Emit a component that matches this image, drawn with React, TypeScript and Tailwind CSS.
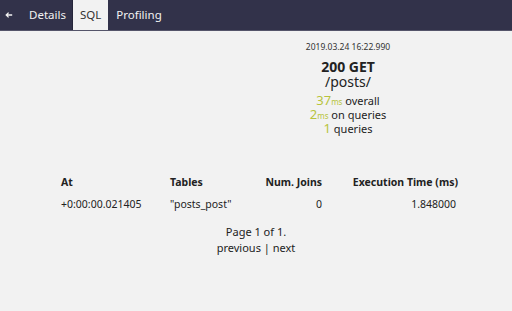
import React from "react";

const rows = [
  { at: "+0:00:00.021405", tables: '"posts_post"', joins: "0", time: "1.848000" },
];

const App: React.FC = () => {
  return (
    <div
      className="w-[512px] h-[311px] bg-[#f2f2f2] text-[#222] overflow-hidden"
      style={{ fontFamily: '"Noto Sans", "Open Sans", sans-serif' }}
    >
      <nav className="flex h-[31px] bg-[#32324a] border-b border-[#55556a] text-[11.5px] text-[#f2f2f2]">
        <a className="flex items-center pl-[5px] pr-[10px]">
          <svg width="8" height="8" viewBox="0 0 10 10" fill="none" stroke="currentColor" strokeWidth="1.6">
            <path d="M9 5H1.5M4.5 2L1.5 5l3 3" />
          </svg>
        </a>
        <a className="flex items-center pl-[6px] pr-[6px] border-r border-[#26263a]">Details</a>
        <a className="flex items-center px-[7px] bg-[#f2f2f2] text-[#333]">SQL</a>
        <a className="flex items-center px-[8px]">Profiling</a>
      </nav>

      <div className="flex pt-[10px]">
        <div className="w-[184px]" />
        <div className="flex-1 flex flex-col items-center">
          <div className="text-[8.5px] leading-[12px] text-[#333]">2019.03.24 16:22.990</div>
          <div className="mt-[7px] text-[14px] font-bold leading-[14px]">200 GET</div>
          <div className="mt-[1px] text-[14px] leading-[14px]">/posts/</div>
          <div className="mt-[5px] flex flex-col items-center text-[11px]">
            <div className="leading-[14px] h-[14px]">
              <span className="text-[13px] leading-none text-[#b8c43c]">37</span>
              <span className="text-[8px] leading-none text-[#b8c43c]">ms</span> overall
            </div>
            <div className="leading-[14px] h-[14px]">
              <span className="text-[13px] leading-none text-[#b8c43c]">2</span>
              <span className="text-[8px] leading-none text-[#b8c43c]">ms</span> on queries
            </div>
            <div className="leading-[14px] h-[14px]">
              <span className="text-[13px] leading-none text-[#b8c43c]">1</span> queries
            </div>
          </div>
        </div>
      </div>

      <table className="mt-[36px] ml-[55px] w-[407px] text-[10.5px]">
        <thead>
          <tr>
            <th className="text-left font-bold py-[3px] pl-[6px] w-[115px]">At</th>
            <th className="text-left font-bold py-[3px] w-[92px]">Tables</th>
            <th className="text-right font-bold py-[3px] w-[60px]">Num. Joins</th>
            <th className="text-right font-bold py-[3px] pr-[4px]">Execution Time (ms)</th>
          </tr>
        </thead>
        <tbody>
          {rows.map((r) => (
            <tr key={r.at}>
              <td className="py-[3px] pl-[6px]">{r.at}</td>
              <td className="py-[3px]">{r.tables}</td>
              <td className="py-[3px] text-right">{r.joins}</td>
              <td className="py-[3px] pr-[6px] text-right">{r.time}</td>
            </tr>
          ))}
        </tbody>
      </table>

      <div className="mt-[8px] flex flex-col items-center text-[11px] leading-[16px]">
        <div>Page 1 of 1.</div>
        <div>
          <a>previous</a> | <a>next</a>
        </div>
      </div>
    </div>
  );
};

export default App;
